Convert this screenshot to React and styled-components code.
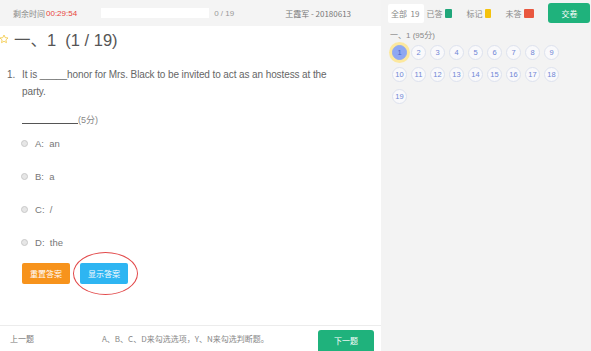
import React from "react";
import styled, { createGlobalStyle } from "styled-components";

const Global = createGlobalStyle`
  html, body { margin: 0; padding: 0; background: #fff; }
  body { font-family: "Liberation Sans", Arial, "Noto Sans CJK SC", sans-serif; }
  * { box-sizing: border-box; }
`;

const Page = styled.div`
  display: flex;
  width: 591px;
  height: 351px;
  overflow: hidden;
`;

const Main = styled.div`
  width: 381px;
  flex: none;
  display: flex;
  flex-direction: column;
  background: #fff;
`;

const TopBar = styled.div`
  height: 26px;
  background: #f4f4f4;
  display: flex;
  align-items: center;
  padding-left: 13px;
  font-size: 8px;
  color: #888;
  white-space: nowrap;
  font-family: "Noto Sans CJK SC", sans-serif;
`;

const Timer = styled.span`
  color: #e8453c;
  margin-left: 1px;
  font-family: "Liberation Sans", Arial, sans-serif;
`;

const Progress = styled.div`
  width: 108px;
  height: 10px;
  background: #fff;
  margin-left: 24px;
`;

const Count = styled.span`
  margin-left: 5px;
  font-family: "Liberation Sans", Arial, sans-serif;
  color: #999;
`;

const User = styled.span`
  margin-left: 51px;
  color: #777;
`;

const Content = styled.div`
  flex: 1;
  display: flex;
  flex-direction: column;
  position: relative;
`;

const Title = styled.div`
  display: flex;
  align-items: center;
  height: 30px;
  margin-top: -2px;
  font-size: 16.5px;
  color: #555;
  white-space: pre;
  font-family: "Liberation Sans", Arial, "Noto Sans CJK SC", sans-serif;
  svg { margin-left: -1px; margin-right: 5px; }
`;

const Question = styled.div`
  display: flex;
  margin-top: 12px;
  padding-left: 7px;
  font-size: 10px;
  line-height: 17px;
  color: #666;
  letter-spacing: -0.1px;
`;

const QNum = styled.span`
  width: 15px;
  flex: none;
`;

const QText = styled.span`
  width: 320px;
`;

const Blank = styled.div`
  margin-top: 13px;
  margin-left: 22px;
  display: flex;
  align-items: flex-end;
  font-size: 9px;
  color: #888;
  font-family: "Liberation Sans", Arial, "Noto Sans CJK SC", sans-serif;
`;

const Line = styled.span`
  width: 56px;
  border-bottom: 1px solid #555;
  margin-bottom: 2px;
`;

const Options = styled.div`
  margin-top: 11px;
  display: flex;
  flex-direction: column;
  gap: 21px;
  padding-left: 21px;
`;

const Option = styled.label`
  display: flex;
  align-items: center;
  height: 12px;
  font-size: 9.5px;
  color: #777;
`;

const Radio = styled.span`
  width: 7px;
  height: 7px;
  border-radius: 50%;
  border: 1px solid #c9c9c9;
  background: #e6e6e6;
  margin-right: 7px;
`;

const Buttons = styled.div`
  display: flex;
  gap: 10px;
  margin-top: 15px;
  padding-left: 22px;
`;

const Btn = styled.div`
  width: 48px;
  height: 21px;
  border-radius: 2px;
  background: ${(p) => p.$bg};
  color: #fff;
  font-size: 8px;
  display: flex;
  align-items: center;
  justify-content: center;
  font-family: "Noto Sans CJK SC", sans-serif;
  position: relative;
`;

const Circle = styled.span`
  position: absolute;
  left: -7px;
  top: -11px;
  width: 65px;
  height: 43px;
  border: 1.5px solid #e2494a;
  border-radius: 50%;
  pointer-events: none;
`;

const Footer = styled.div`
  height: 26px;
  border-top: 1px solid #ececec;
  display: flex;
  align-items: center;
  font-size: 8px;
  color: #777;
  font-family: "Noto Sans CJK SC", sans-serif;
`;

const Prev = styled.span`
  margin-left: 10px;
  width: 92px;
`;

const Hint = styled.span`
  flex: 1;
  color: #888;
`;

const Next = styled.div`
  align-self: flex-end;
  width: 56px;
  height: 21px;
  margin-right: 7px;
  background: #1fb27c;
  color: #fff;
  border-radius: 3px 3px 0 0;
  display: flex;
  align-items: center;
  justify-content: center;
  font-size: 8px;
`;

const Side = styled.div`
  flex: 1;
  min-width: 0;
  background: #f3f3f3;
  display: flex;
  flex-direction: column;
`;

const SideHead = styled.div`
  height: 26px;
  display: flex;
  align-items: center;
  padding-left: 7px;
  font-size: 8px;
  color: #888;
  white-space: nowrap;
  font-family: "Noto Sans CJK SC", sans-serif;
  > * { flex: none; }
`;

const AllTab = styled.span`
  background: #fff;
  height: 19px;
  display: flex;
  align-items: center;
  padding: 0 5px 0 3px;
  border-radius: 2px;
  margin-right: 2px;
`;

const Legend = styled.span`
  display: flex;
  align-items: center;
  margin-right: 14px;
`;

const Swatch = styled.span`
  display: inline-block;
  width: ${(p) => p.$w}px;
  height: 9px;
  border-radius: 1px;
  background: ${(p) => p.$c};
  margin-left: 3px;
`;

const Submit = styled.div`
  margin-left: auto;
  margin-right: 1px;
  width: 42px;
  height: 20px;
  background: #1fb27c;
  color: #fff;
  border-radius: 3px;
  display: flex;
  align-items: center;
  justify-content: center;
  font-size: 8px;
`;

const GroupTitle = styled.div`
  padding-left: 9px;
  margin-top: 3px;
  font-size: 8px;
  color: #888;
  height: 12px;
  font-family: "Liberation Sans", Arial, "Noto Sans CJK SC", sans-serif;
`;

const Grid = styled.div`
  display: grid;
  grid-template-columns: repeat(9, 15px);
  column-gap: 4px;
  row-gap: 7px;
  padding-left: 11px;
  margin-top: 4px;
`;

const Num = styled.span`
  width: 15px;
  height: 15px;
  border-radius: 50%;
  display: flex;
  align-items: center;
  justify-content: center;
  font-size: 7.5px;
  color: ${(p) => (p.$active ? "#4a63c8" : "#6f86d6")};
  background: ${(p) => (p.$active ? "#8ea7f2" : "#f9f9fb")};
  border: 1px solid ${(p) => (p.$active ? "#8ea7f2" : "#dde2ee")};
  box-shadow: ${(p) => (p.$active ? "0 0 0 3px rgba(255, 228, 130, 0.75)" : "none")};
`;

const Star = () => (
  <svg width="10" height="10" viewBox="0 0 24 24">
    <path
      d="M12 2.5l2.9 6.2 6.7.8-5 4.6 1.3 6.7L12 17.5l-5.9 3.3 1.3-6.7-5-4.6 6.7-.8z"
      fill="none"
      stroke="#f2c230"
      strokeWidth="1.8"
      strokeLinejoin="round"
    />
  </svg>
);

export default function App() {
  const opts = [
    ["A", "an"],
    ["B", "a"],
    ["C", "/"],
    ["D", "the"],
  ];
  const nums = Array.from({ length: 19 }, (_, i) => i + 1);
  return (
    <>
      <Global />
      <Page>
        <Main>
          <TopBar>
            剩余时间<Timer>00:29:54</Timer>
            <Progress />
            <Count>0 / 19</Count>
            <User>王霞军 - 20180613</User>
          </TopBar>
          <Content>
            <Title>
              <Star />
              {"一、1  (1 / 19)"}
            </Title>
            <Question>
              <QNum>1.</QNum>
              <QText>
                It is _____honor for Mrs. Black to be invited to act as an hostess at the party.
              </QText>
            </Question>
            <Blank>
              <Line />
              (5分)
            </Blank>
            <Options>
              {opts.map(([k, v]) => (
                <Option key={k}>
                  <Radio />
                  {k}:&nbsp;&nbsp;{v}
                </Option>
              ))}
            </Options>
            <Buttons>
              <Btn $bg="#f7931c">重置答案</Btn>
              <Btn $bg="#2eb5f2">
                显示答案
                <Circle />
              </Btn>
            </Buttons>
          </Content>
          <Footer>
            <Prev>上一题</Prev>
            <Hint>A、B、C、D来勾选选项，Y、N来勾选判断题。</Hint>
            <Next>下一题</Next>
          </Footer>
        </Main>
        <Side>
          <SideHead>
            <AllTab>全部&nbsp;&nbsp;19</AllTab>
            <Legend>
              已答<Swatch $c="#1fa67a" $w={7} />
            </Legend>
            <Legend>
              标记<Swatch $c="#f4c20d" $w={6} />
            </Legend>
            <Legend>
              未答<Swatch $c="#e9573f" $w={10} />
            </Legend>
            <Submit>交卷</Submit>
          </SideHead>
          <GroupTitle>一、1 (95分)</GroupTitle>
          <Grid>
            {nums.map((n) => (
              <Num key={n} $active={n === 1}>
                {n}
              </Num>
            ))}
          </Grid>
        </Side>
      </Page>
    </>
  );
}
